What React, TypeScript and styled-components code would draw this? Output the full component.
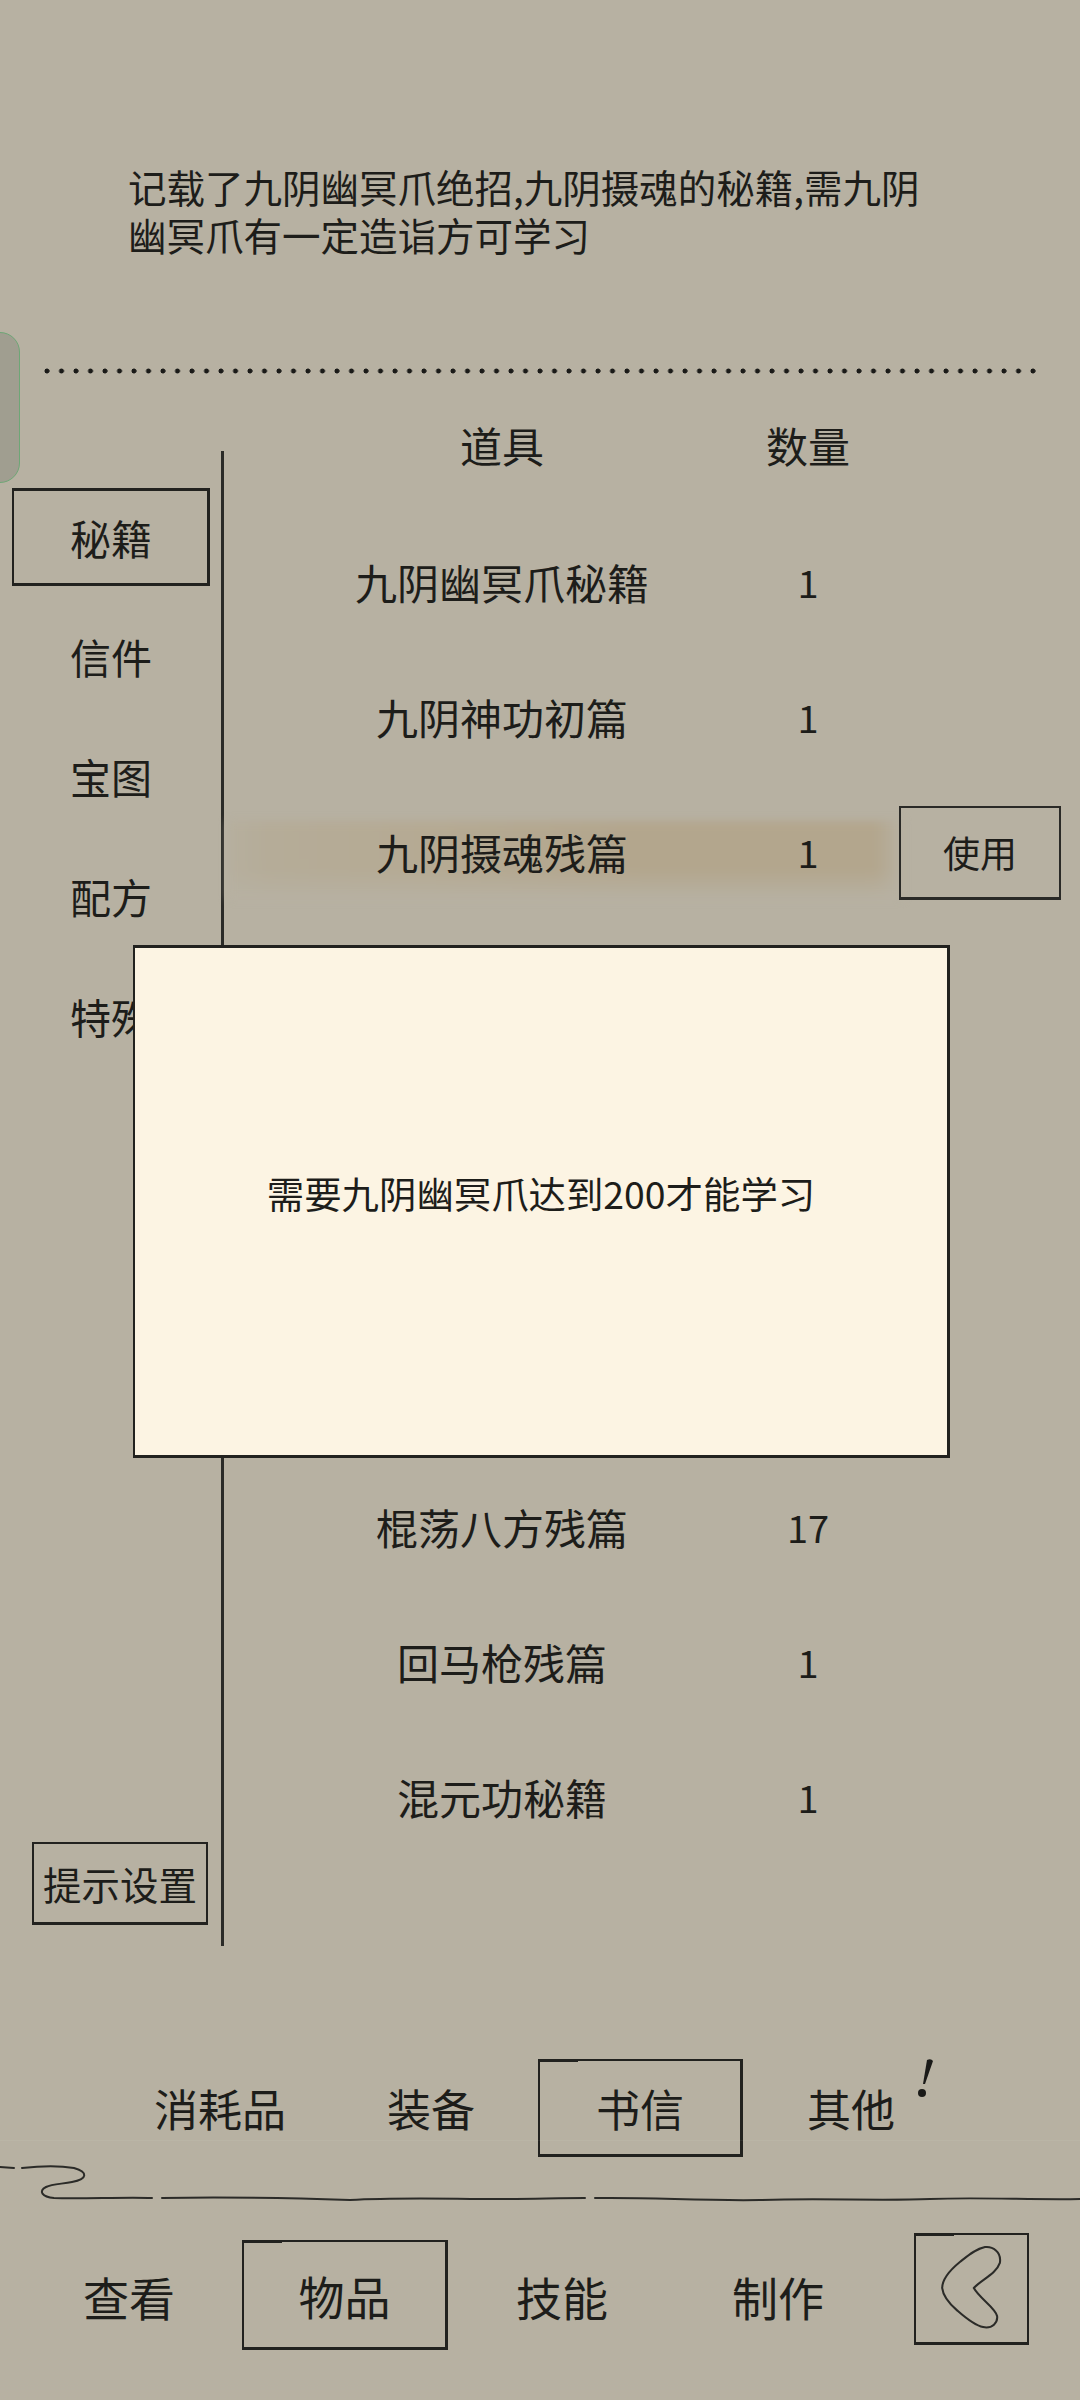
import React from 'react';
import styled, { createGlobalStyle } from 'styled-components';

const INK = '#1d1d1a';
const PAPER = '#b7b1a2';

const GlobalStyle = createGlobalStyle`
  html, body {
    margin: 0;
    padding: 0;
    background: ${PAPER};
  }
  * {
    box-sizing: border-box;
  }
`;

const Page = styled.div`
  position: relative;
  display: flex;
  flex-direction: column;
  width: 1080px;
  height: 2400px;
  overflow: hidden;
  background: ${PAPER};
  color: ${INK};
  font-family: "Noto Sans CJK SC", "Noto Sans", sans-serif;
  font-size: 42px;
  &::after {
    content: "";
    position: absolute;
    left: 0;
    right: 0;
    top: 2140px;
    height: 1px;
    background: rgba(255, 255, 255, 0.05);
  }
`;

const SideHandle = styled.div`
  position: absolute;
  left: -2px;
  top: 332px;
  width: 22px;
  height: 151px;
  background: #a09e90;
  border: 1px solid #6ea676;
  border-radius: 0 20px 20px 0;
`;

const Description = styled.p`
  width: 938px;
  margin: 0;
  padding: 162px 0 0 128px;
  font-size: 38.5px;
  line-height: 48px;
`;

const DottedRule = styled.div`
  height: 6px;
  margin: 110px 44px 0;
  background-image: radial-gradient(circle at 3px 3px, #1a1a18 2.2px, transparent 2.8px);
  background-size: 14.5px 6px;
  background-repeat: repeat-x;
`;

const Main = styled.div`
  display: flex;
  height: 1534px;
  margin-top: 38px;
`;

const Sidebar = styled.nav`
  display: flex;
  flex-direction: column;
  flex: 0 0 224px;
  height: 1495px;
  margin-top: 39px;
  padding-top: 25px;
  border-right: 3px solid #2b2b28;
  font-size: 41px;
`;

const SideTab = styled.div<{ $active?: boolean }>`
  position: relative;
  display: flex;
  align-items: center;
  flex: 0 0 120px;
  padding-left: 70px;
  ${(p) =>
    p.$active &&
    `
    flex-basis: 98px;
    width: 198px;
    margin: 12px 0 10px 12px;
    padding-left: 56px;
    border: 2px solid #22221f;
    border-bottom-width: 3px;
    border-right-width: 3px;
    border-top-width: 3px;
  `}
`;

const HintButton = styled.div`
  position: relative;
  display: flex;
  align-items: center;
  justify-content: center;
  width: 176px;
  height: 83px;
  margin: auto 0 21px 32px;
  border: 2px solid #22221f;
  border-bottom-width: 3px;
  font-size: 38.5px;
  white-space: nowrap;
`;

const ItemList = styled.div`
  flex: 1;
  display: flex;
  flex-direction: column;
`;

const HeaderRow = styled.div`
  display: grid;
  grid-template-columns: 408px 204px;
  align-items: center;
  height: 64px;
  margin-bottom: 38px;
  padding-left: 74px;
  text-align: center;
`;

const ItemRow = styled.div`
  position: relative;
  display: grid;
  grid-template-columns: 408px 204px 1fr;
  align-items: center;
  flex: 0 0 135px;
  padding-left: 74px;
  text-align: center;
`;

const Highlight = styled.div`
  position: absolute;
  left: 4px;
  right: 178px;
  top: 37px;
  height: 78px;
  background:
    linear-gradient(180deg, rgba(183, 177, 162, 0) 62%, #b7b1a2 100%),
    linear-gradient(90deg, #b6af9e 0%, #b5ac98 6%, #b5aa93 30%, #b3a68d 60%, #b3a68d 96%, #b7b1a2 100%);
  filter: blur(4px);
`;

const Cell = styled.div`
  position: relative;
  white-space: nowrap;
`;

const Count = styled(Cell)`
  font-size: 38px;
`;

const UseButton = styled.div`
  position: relative;
  display: flex;
  align-items: center;
  justify-content: center;
  width: 162px;
  height: 94px;
  margin: 2px 0 0 -11px;
  border: 2px solid #2a2a27;
  border-bottom-width: 3px;
  font-size: 37px;
`;

const Dialog = styled.div`
  position: absolute;
  left: 133px;
  top: 945px;
  display: flex;
  align-items: center;
  justify-content: center;
  width: 817px;
  height: 513px;
  padding-bottom: 18px;
  background: #fcf4e3;
  border: 3px solid #22221f;
  border-left-width: 2px;
  font-size: 37.4px;
`;

const SubTabs = styled.div`
  display: grid;
  grid-template-columns: 208px 214px 205px 216px;
  align-items: center;
  height: 98px;
  margin-top: 113px;
  padding-left: 116px;
  text-align: center;
  font-size: 44px;
`;

const SketchTab = styled.div`
  position: relative;
  display: flex;
  align-items: center;
  justify-content: center;
  height: 100%;
  border: 2px solid #22221f;
  border-bottom-width: 3px;
  border-right-width: 3px;
  &::before {
    content: "";
    position: absolute;
    left: -2px;
    top: -2px;
    width: 40px;
    height: 3px;
    background: #22221f;
  }
`;

const TabLabel = styled.div`
  position: relative;
`;

const AlertMark = styled.svg`
  position: absolute;
  left: 174px;
  top: -17px;
  width: 16px;
  height: 40px;
`;

const DividerArt = styled.svg`
  display: block;
  width: 1080px;
  height: 50px;
`;

const BottomNav = styled.div`
  display: grid;
  grid-template-columns: 226px 206px 228px 204px 149px;
  align-items: center;
  height: 118px;
  margin-top: 25px;
  padding-left: 16px;
  text-align: center;
  font-size: 46px;
`;

const NavLabel = styled.div`
  padding-top: 10px;
`;

const NavActive = styled(SketchTab)`
  height: 110px;
  margin-top: 8px;
`;

const BackButton = styled(SketchTab)`
  width: 115px;
  height: 112px;
  margin-left: 34px;
  margin-top: -4px;
  border-width: 2px;
  border-bottom-width: 3px;
`;

const items: { name: string; count: string; active?: boolean }[] = [
  { name: '九阴幽冥爪秘籍', count: '1' },
  { name: '九阴神功初篇', count: '1' },
  { name: '九阴摄魂残篇', count: '1', active: true },
  { name: '', count: '' },
  { name: '', count: '' },
  { name: '', count: '' },
  { name: '', count: '' },
  { name: '棍荡八方残篇', count: '17' },
  { name: '回马枪残篇', count: '1' },
  { name: '混元功秘籍', count: '1' },
];

const sideTabs = ['秘籍', '信件', '宝图', '配方', '特殊'];

export default function App() {
  return (
    <Page>
      <GlobalStyle />
      <SideHandle />
      <Description>记载了九阴幽冥爪绝招,九阴摄魂的秘籍,需九阴幽冥爪有一定造诣方可学习</Description>
      <DottedRule />

      <Main>
        <Sidebar>
          {sideTabs.map((tab, i) => (
            <SideTab key={tab} $active={i === 0}>
              {tab}
            </SideTab>
          ))}
          <HintButton>提示设置</HintButton>
        </Sidebar>

        <ItemList>
          <HeaderRow>
            <Cell>道具</Cell>
            <Cell>数量</Cell>
          </HeaderRow>
          {items.map((item, i) => (
            <ItemRow key={i}>
              {item.active && <Highlight />}
              <Cell>{item.name}</Cell>
              <Count>{item.count}</Count>
              {item.active && <UseButton>使用</UseButton>}
            </ItemRow>
          ))}
        </ItemList>
      </Main>

      <SubTabs>
        <div>消耗品</div>
        <div>装备</div>
        <SketchTab>书信</SketchTab>
        <TabLabel>
          其他
          <AlertMark viewBox="0 0 16 40">
            <path d="M10 1 Q14 -1 16 2 L8 25 L6 25 Z" fill="#1a1a18" />
            <circle cx="5" cy="34" r="4" fill="#1a1a18" />
          </AlertMark>
        </TabLabel>
      </SubTabs>

      <DividerArt viewBox="0 0 1080 50">
        <g fill="none" stroke="#2b2b28" strokeWidth="2" strokeLinecap="round">
          <path d="M0 10 L14 11" />
          <path d="M22 11 C40 9 62 9 74 11 C88 15 88 22 72 25 C62 27 52 27 46 30 C38 34 42 40 54 41 C80 42 125 40 152 41" />
          <path d="M162 41 C220 40 290 41 350 43 C400 40 450 42 500 42 C530 42 560 41 585 41" />
          <path d="M595 41 C650 40 700 44 760 43 C820 41 880 44 930 42 C980 40 1030 43 1080 42" />
        </g>
      </DividerArt>

      <BottomNav>
        <NavLabel>查看</NavLabel>
        <NavActive>物品</NavActive>
        <NavLabel>技能</NavLabel>
        <NavLabel>制作</NavLabel>
        <BackButton>
          <svg width="111" height="107" viewBox="0 0 115 115" fill="none">
            <path
              d="M60 57 C68 48 84 42 88 30 C90 18 80 12 72 13 C62 15 54 22 45 29 C34 38 26 47 26 57 C27 66 34 74 42 81 C50 88 60 97 70 99 C80 101 86 94 85 87 C83 78 66 68 60 57 Z"
              stroke="#2b2b28"
              strokeWidth="2.2"
            />
          </svg>
        </BackButton>
      </BottomNav>

      <Dialog>需要九阴幽冥爪达到200才能学习</Dialog>
    </Page>
  );
}
